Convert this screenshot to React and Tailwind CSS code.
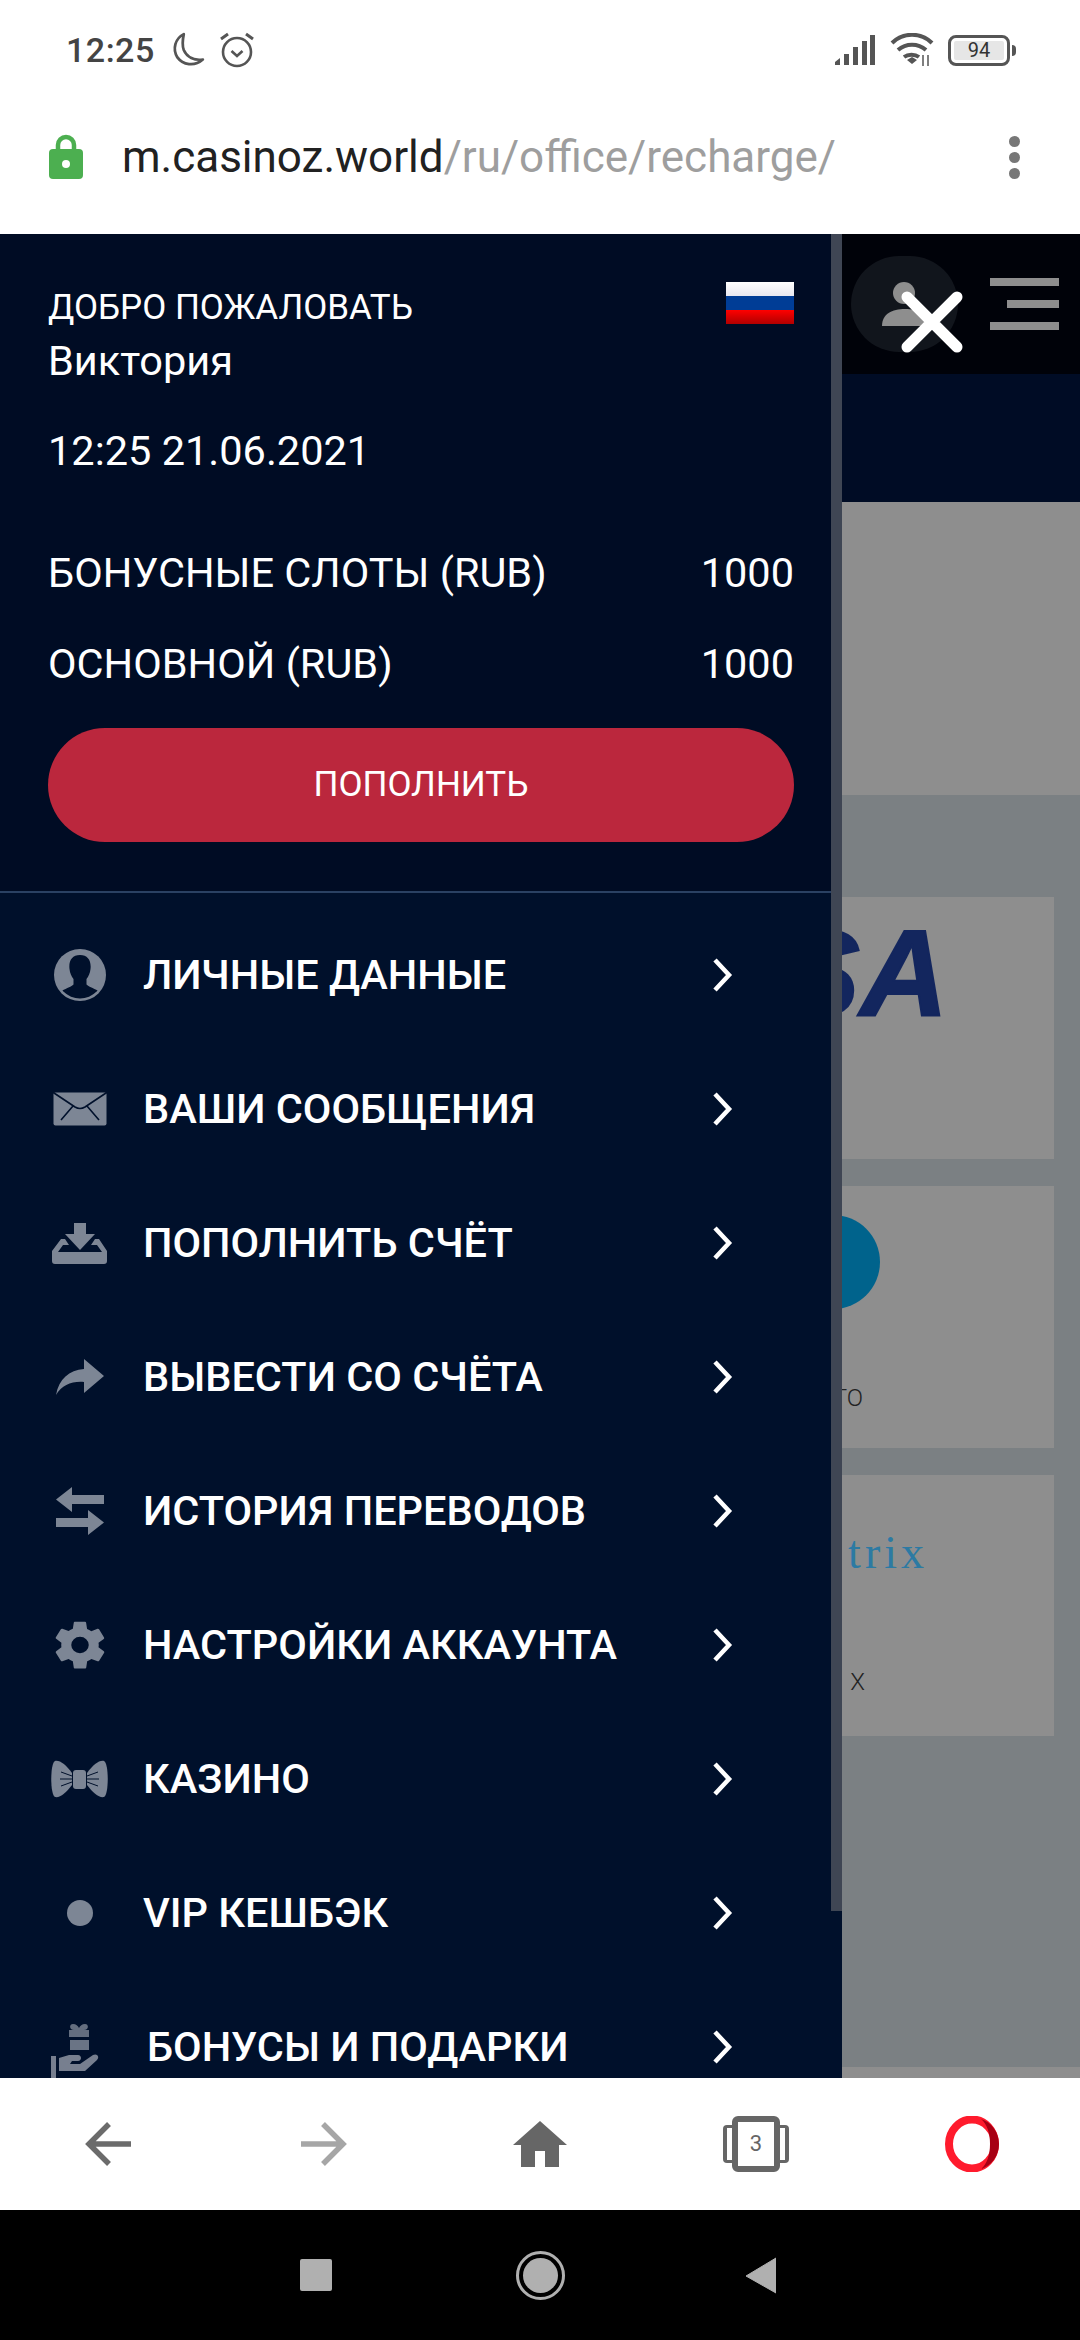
import React from 'react';

const Chevron = () => (
  <svg width="24" height="36" viewBox="0 0 24 36" className="shrink-0">
    <path d="M5 3 L19 18 L5 33" fill="none" stroke="#fff" strokeWidth="4.5" />
  </svg>
);

const fillIcon = '#7d8695';
const navy = '#00102b';

const PersonIcon = () => (
  <svg width="54" height="54" viewBox="0 0 54 54">
    <circle cx="27" cy="27" r="26" fill={fillIcon} />
    <clipPath id="person-clip">
      <circle cx="27" cy="27" r="23.500" />
    </clipPath>
    <path d="M27 7c-8 0-11.500 6-10.500 14 .4 4 2 7.500 4 10v5.500c-3 3-9 4-13 7.500v10h39V44c-4-3.500-10-4.500-13-7.500V31c2-2.500 3.600-6 4-10 1-8-2.500-14-10.500-14z" fill={navy} clipPath="url(#person-clip)" />
  </svg>
);

const MailIcon = () => (
  <svg width="54" height="34" viewBox="0 0 54 34">
    <rect x="0.500" y="0.500" width="53" height="33" rx="2" fill={fillIcon} />
    <path d="M1 1 L22 15 Q27 18 32 15 L53 1 M8 28 L20 14 M46 28 L34 14" fill="none" stroke={navy} strokeWidth="1.600" />
  </svg>
);

const TrayIcon = () => (
  <svg width="56" height="41" viewBox="0 0 56 41">
    <path d="M22 0h12v11h9L28 27 13 11h9z" fill={fillIcon} />
    <path d="M9 16h4l4 6H11L6 29h44l-5-7h-6l4-6h4l8 12v10a3 3 0 0 1-3 3H3a3 3 0 0 1-3-3V28z" fill={fillIcon} />
  </svg>
);

const ShareIcon = () => (
  <svg width="48" height="36" viewBox="0 0 48 36">
    <path d="M28 0 L48 17 L28 34 V23 C16 22 6 26 0 36 C3 20 13 11 28 10 Z" fill={fillIcon} />
  </svg>
);

const SwapIcon = () => (
  <svg width="48" height="48" viewBox="0 0 48 48">
    <path d="M16 0v8h32v9H16v8L0 12.500zM32 23v8H0v9h32v8l16-12.500z" fill={fillIcon} />
  </svg>
);

const GearIcon = () => (
  <svg width="60" height="56" viewBox="0 0 24 24" preserveAspectRatio="none">
    <path d="M19.400 13c.04-.3.100-.7.100-1s-.06-.7-.1-1l2.100-1.600c.2-.15.25-.4.12-.64l-2-3.460c-.12-.22-.39-.3-.61-.22l-2.490 1a7.300 7.300 0 0 0-1.690-.98l-.38-2.650A.49.490 0 0 0 14 2h-4c-.25 0-.46.180-.49.420l-.38 2.650c-.61.250-1.170.590-1.690.980l-2.490-1c-.23-.09-.49 0-.61.220l-2 3.460c-.13.220-.07.490.12.640L4.570 11c-.04.320-.07.650-.07 1s.03.680.07 1l-2.110 1.650c-.19.150-.24.420-.12.640l2 3.460c.12.220.39.300.61.220l2.490-1c.52.400 1.080.730 1.690.980l.38 2.650c.03.240.24.420.49.420h4c.25 0 .46-.18.49-.42l.38-2.650c.61-.25 1.170-.59 1.690-.98l2.490 1c.23.090.49 0 .61-.22l2-3.460c.12-.22.070-.49-.12-.64zM12 15.500a3.500 3.500 0 1 1 0-7 3.500 3.500 0 0 1 0 7z" fill={fillIcon} />
  </svg>
);

const BowIcon = () => (
  <svg width="57" height="38" viewBox="0 0 57 38">
    <path d="M21 13C15 5 9 0 4 1-1 3-1 35 4 37c5 1 11-4 17-12z" fill={fillIcon} />
    <path d="M36 13C42 5 48 0 53 1c5 2 5 34 0 36-5 1-11-4-17-12z" fill={fillIcon} />
    <rect x="22" y="10" width="13" height="19" rx="3" fill={fillIcon} />
    <path d="M10 12l11 4M9 19h12M10 26l11-4M47 12l-11 4M48 19H36M47 26l-11-4" stroke={navy} strokeWidth="1" fill="none" />
  </svg>
);

const DotIcon = () => <div className="h-[26px] w-[26px] rounded-full bg-[#7d8695]" />;

const GiftHandIcon = () => (
  <svg width="58" height="56" viewBox="0 0 58 56" className="mt-[10px]">
    <path d="M22 0c3 0 5 2 6 4 1-2 3-4 6-4 4 0 4 6-1 6h5v7H18V6h5c-5 0-5-6-1-6z" fill={fillIcon} opacity="0.8" />
    <rect x="19" y="16" width="19" height="10" fill={fillIcon} opacity="0.85" />
    <path d="M0 32h5v24H0zM8 34l10-3h9c4 0 4 6 0 6h-6l-2 3h10l13-9c4-2 7 2 4 5L34 47H8z" fill={fillIcon} opacity="0.95" />
  </svg>
);

const menu = [
  { label: 'ЛИЧНЫЕ ДАННЫЕ', icon: <PersonIcon /> },
  { label: 'ВАШИ СООБЩЕНИЯ', icon: <MailIcon /> },
  { label: 'ПОПОЛНИТЬ СЧЁТ', icon: <TrayIcon /> },
  { label: 'ВЫВЕСТИ СО СЧЁТА', icon: <ShareIcon /> },
  { label: 'ИСТОРИЯ ПЕРЕВОДОВ', icon: <SwapIcon /> },
  { label: 'НАСТРОЙКИ АККАУНТА', icon: <GearIcon /> },
  { label: 'КАЗИНО', icon: <BowIcon /> },
  { label: 'VIP КЕШБЭК', icon: <DotIcon /> },
  { label: 'БОНУСЫ И ПОДАРКИ', icon: <GiftHandIcon />, shift: true },
];

const StatusBar = () => (
  <div className="flex h-[100px] shrink-0 items-center bg-white pl-[66px] pr-[64px]">
    <span className="text-[34px] font-medium tracking-[0.5px] text-[#444]">12:25</span>
    <svg width="36" height="36" viewBox="0 0 34 34" className="ml-[15px]">
      <path d="M13 2C5 6 2 16 7 24c5 7 16 9 24 2-8 1-15-2-18-9-2-5-1-10 0-15z" fill="none" stroke="#555" strokeWidth="2.600" strokeLinejoin="round" />
    </svg>
    <svg width="36" height="36" viewBox="0 0 36 36" className="ml-[13px]">
      <circle cx="18" cy="20" r="14" fill="none" stroke="#555" strokeWidth="2.600" />
      <path d="M12.500 19l5.500 5 5.500-5" fill="none" stroke="#555" strokeWidth="2.600" />
      <path d="M2 7l7-5M34 7l-7-5" stroke="#555" strokeWidth="3" />
    </svg>
    <div className="flex-1" />
    <svg width="40" height="30" viewBox="0 0 40 30">
      <path d="M0 30v-3l5-4v7zM9 30V19h5v11zM18 30V12h5v18zM27 30V6h5v24zM35 30V0h5v30z" fill="#555" />
    </svg>
    <svg width="46" height="34" viewBox="0 0 46 34" className="ml-[15px]">
      <path d="M2 10c11-11 29-11 40 0M8 17c8-7 20-7 28 0M14 24c4-3 11-3 15 0" fill="none" stroke="#555" strokeWidth="4" />
      <path d="M17 27l5-3 5 3-5 4z" fill="#555" />
      <path d="M33 22v11M38 22v11" stroke="#555" strokeWidth="1.500" />
    </svg>
    <div className="ml-[12px] flex items-center">
      <div className="flex h-[31px] w-[62px] items-center justify-center rounded-[8px] border-[3.500px] border-[#555] p-[3px]">
        <div className="flex h-full w-full items-center justify-center rounded-[2px] bg-[#e6e6e6] text-[20px] leading-none text-[#333]">94</div>
      </div>
      <div className="ml-[2px] h-[11px] w-[4px] rounded-r-sm bg-[#555]" />
    </div>
  </div>
);

const UrlBar = () => (
  <div className="flex h-[134px] shrink-0 items-center bg-white pb-[20px] pl-[49px] pr-[60px]">
    <svg width="34" height="46" viewBox="0 0 34 46" className="shrink-0">
      <path d="M9 18v-7a8 8 0 0 1 16 0v7" fill="none" stroke="#4caf50" strokeWidth="4.500" />
      <rect x="0" y="15" width="34" height="30" rx="4" fill="#4caf50" />
      <circle cx="17" cy="30" r="4" fill="#fff" />
    </svg>
    <div className="ml-[39px] flex-1 whitespace-nowrap text-[44px] leading-none">
      <span className="text-[#212121]">m.casinoz.world</span>
      <span className="text-[#9e9e9e]">/ru/office/recharge/</span>
    </div>
    <div className="flex flex-col gap-[5px]">
      <div className="h-[11px] w-[11px] rounded-full bg-[#777]" />
      <div className="h-[11px] w-[11px] rounded-full bg-[#777]" />
      <div className="h-[11px] w-[11px] rounded-full bg-[#777]" />
    </div>
  </div>
);

// what sits behind the drawer
const Page = () => (
  <div className="flex h-full flex-col bg-[#7b8083]">
    <div className="flex h-[140px] shrink-0 items-center justify-end bg-[#000209] pr-[21px]">
      <div className="mr-[32px] flex h-[96px] w-[107px] items-center justify-center rounded-[48px] bg-[#11151c]">
        <svg width="46" height="44" viewBox="0 0 46 44">
          <circle cx="22" cy="11" r="11" fill="#8e8e8e" />
          <path d="M0 44c0-12 10-17 23-17s23 5 23 17z" fill="#8e8e8e" />
        </svg>
      </div>
      <div className="flex flex-col items-end gap-[14px]">
        <div className="h-[8px] w-[69px] bg-[#8e8e8e]" />
        <div className="h-[8px] w-[52px] bg-[#8e8e8e]" />
        <div className="h-[8px] w-[69px] bg-[#8e8e8e]" />
      </div>
    </div>
    <div className="h-[128px] shrink-0 bg-[#000c25]" />
    <div className="h-[293px] shrink-0 bg-[#8e8e8e]" />
    <div className="ml-[560px] mr-[26px] mt-[102px] flex shrink-0 flex-col gap-[27px]">
      <div className="flex h-[262px] flex-col items-end bg-[#8e8e8e] pr-[106px] pt-[16px]">
        <span className="font-['Liberation_Sans',sans-serif] text-[122px] font-bold italic leading-none text-[#13265e] [-webkit-text-stroke:2px_#13265e]">VISA</span>
      </div>
      <div className="flex h-[262px] flex-col items-end bg-[#8e8e8e] pr-[174px] pt-[29px]">
        <div className="h-[94px] w-[94px] rounded-full bg-[#00638c]" />
        <span className="mr-[17px] mt-[77px] font-['Roboto',sans-serif] text-[24px] font-light leading-none text-[#222]">TO</span>
      </div>
      <div className="flex h-[261px] flex-col items-end bg-[#8e8e8e] pr-[126px] pt-[55px]">
        <span className="font-['Liberation_Serif',serif] text-[46px] leading-none tracking-[4px] text-[#2c7aa3]">trix</span>
        <span className="mr-[63px] mt-[94px] font-['Roboto',sans-serif] text-[24px] font-light leading-none text-[#222]">X</span>
      </div>
    </div>
    <div className="mt-[331px] h-[40px] shrink-0 bg-[#8e8e8e]" />
  </div>
);

const Drawer = () => (
  <div className="absolute inset-y-0 left-0 w-[842px] overflow-hidden bg-[#00102b]">
    <div className="bg-[#000c24] pb-[49px]">
      <div className="flex items-start justify-between px-[48px] pt-[52px] text-white">
        <div className="flex flex-col">
          <span className="text-[35px] leading-[44px]">ДОБРО ПОЖАЛОВАТЬ</span>
          <span className="mt-[8px] text-[41.500px] leading-[46px]">Виктория</span>
        </div>
        <div className="-mt-[4px] flex h-[42px] w-[68px] flex-col bg-white">
          <div className="h-[14px] bg-gradient-to-b from-white to-[#e8e8f0]" />
          <div className="h-[14px] bg-[#003d96]" />
          <div className="h-[14px] bg-gradient-to-b from-[#ff0000] to-[#b00000]" />
        </div>
      </div>
      <div className="mt-[44px] pl-[48px] text-[41.500px] leading-[46px] text-white">12:25 21.06.2021</div>
      <div className="mt-[76px] flex flex-col gap-[45px] px-[48px] text-[41.500px] leading-[46px] text-white">
        <div className="flex justify-between"><span>БОНУСНЫЕ СЛОТЫ (RUB)</span><span>1000</span></div>
        <div className="flex justify-between"><span>ОСНОВНОЙ (RUB)</span><span>1000</span></div>
      </div>
      <div className="mx-[48px] mt-[41px] flex h-[114px] items-center justify-center rounded-[57px] bg-[#bb273d] text-[35px] text-white">ПОПОЛНИТЬ</div>
    </div>
    <div className="h-[2px] w-full bg-[#2a4163]" />
    <div className="mt-[15px] flex flex-col">
      {menu.map((item) => (
        <div key={item.label} className="flex h-[134px] shrink-0 items-center pl-[48px] pr-[108px]">
          <div className="flex w-[63px] shrink-0 justify-center">{item.icon}</div>
          <span className={`flex-1 text-[41.500px] font-medium text-white ${item.shift ? 'ml-[36px]' : 'ml-[32px]'}`}>{item.label}</span>
          <Chevron />
        </div>
      ))}
    </div>
    {/* scrollbar of the drawer */}
    <div className="absolute right-0 top-0 h-[1677px] w-[11px] bg-[#3f4654]" />
  </div>
);

const BottomBar = () => (
  <div className="flex h-[132px] shrink-0 items-center justify-around bg-white">
    <div className="flex w-[216px] justify-center">
      <svg width="46" height="46" viewBox="0 0 46 46"><path d="M46 23H6M24 3 4 23l20 20" fill="none" stroke="#6b6b6b" strokeWidth="5.500" /></svg>
    </div>
    <div className="flex w-[216px] justify-center">
      <svg width="46" height="46" viewBox="0 0 46 46"><path d="M0 23h40M22 3l20 20-20 20" fill="none" stroke="#a6a6a6" strokeWidth="5.500" /></svg>
    </div>
    <div className="flex w-[216px] justify-center">
      <svg width="54" height="46" viewBox="0 0 54 46"><path d="M27 0 54 24H46V46H32V30H22V46H8V24H0z" fill="#666" /></svg>
    </div>
    <div className="flex w-[216px] justify-center">
      <div className="flex items-center">
        <div className="h-[38px] w-[9px] rounded-l-[4px] border-y-[3px] border-l-[4px] border-[#666]" />
        <div className="flex h-[56px] w-[48px] items-center justify-center rounded-[6px] border-[6px] border-[#666] text-[22px] leading-none text-[#666]">3</div>
        <div className="h-[38px] w-[9px] rounded-r-[4px] border-y-[3px] border-r-[4px] border-[#666]" />
      </div>
    </div>
    <div className="flex w-[216px] justify-center">
      <svg width="54" height="56" viewBox="0 0 54 56">
        <ellipse cx="27" cy="28" rx="23" ry="24.500" fill="none" stroke="#ff1b2d" strokeWidth="8" />
        <path d="M36 3c10 3 18 13 18 25s-8 22-18 25c6-5 9-14 9-25S42 8 36 3z" fill="#a70014" />
      </svg>
    </div>
  </div>
);

const NavBar = () => (
  <div className="flex h-[130px] shrink-0 items-center justify-center bg-black">
    <div className="flex w-[224px] justify-center">
      <div className="h-[32px] w-[32px] rounded-[2px] bg-[#b0b0b0]" />
    </div>
    <div className="flex w-[224px] justify-center">
      <div className="flex h-[49px] w-[49px] items-center justify-center rounded-full border-[3px] border-[#b0b0b0]">
        <div className="h-[35px] w-[35px] rounded-full bg-[#b0b0b0]" />
      </div>
    </div>
    <div className="flex w-[224px] justify-center">
      <svg width="31" height="37" viewBox="0 0 31 37" className="mr-[8px]"><path d="M31 1v35L1 19z" fill="#b0b0b0" stroke="#b0b0b0" strokeLinejoin="round" /></svg>
    </div>
  </div>
);

const App = () => {
  return (
    <div className="flex h-[2340px] w-[1080px] flex-col overflow-hidden bg-white font-['Roboto',sans-serif]">
      <StatusBar />
      <UrlBar />
      <div className="relative min-h-0 flex-1 overflow-hidden">
        <Page />
        <Drawer />
        {/* close button over the page header */}
        <svg width="62" height="62" viewBox="0 0 62 62" className="absolute left-[901px] top-[57px]">
          <path d="M6 6l50 50M56 6 6 56" stroke="#fff" strokeWidth="11" strokeLinecap="round" />
        </svg>
      </div>
      <BottomBar />
      <NavBar />
    </div>
  );
};

export default App;
